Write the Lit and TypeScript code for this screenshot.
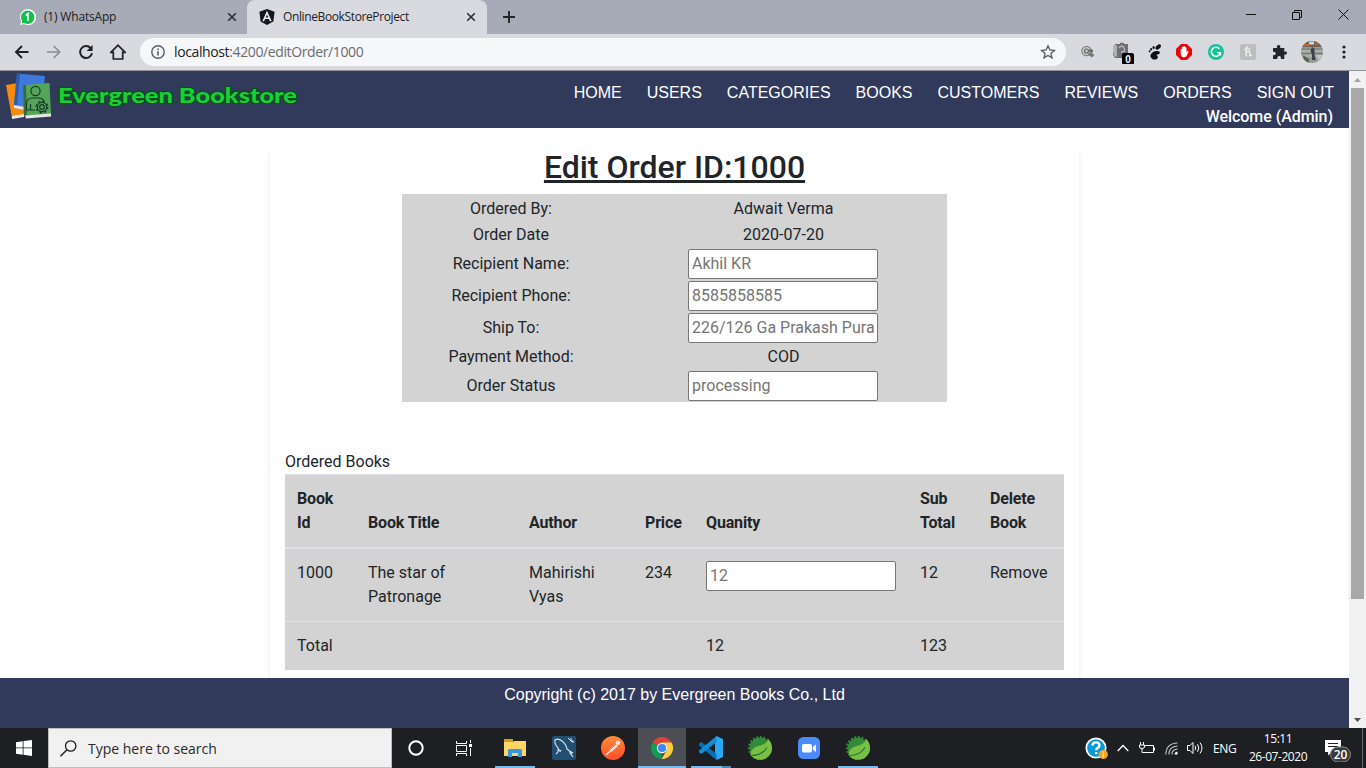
import { LitElement, html, svg, css } from "lit";
import { customElement } from "lit/decorators.js";

const closeX = html`<svg class="tab-close" width="10" height="10" viewBox="0 0 10 10"><path d="M1.2 1.2 8.8 8.8M8.8 1.2 1.2 8.8" stroke="#2b2d31" stroke-width="1.6" fill="none"/></svg>`;

@customElement("browser-chrome")
export class BrowserChrome extends LitElement {
  static styles = css`
    :host { display: block; font-family: "Open Sans", sans-serif; color: #202124; height: 70px; border-bottom: 1px solid #929397; }
    svg { display: block; flex: none; }
    .tabs { height: 34px; background: #a7abb7; display: flex; align-items: flex-start; }
    .tab { display: flex; align-items: center; height: 34px; font-size: 12px; box-sizing: border-box; white-space: nowrap; }
    .tab-one { width: 247px; padding: 0 10px 0 19px; }
    .tab-two { width: 240px; padding: 0 11px 0 12px; background: #d9dadf; border-radius: 8px 8px 0 0; }
    .t1 { margin: 0 0 1px 8px; letter-spacing: -0.18px; flex: 1; }
    .t2 { margin: 0 0 1px 8px; letter-spacing: -0.38px; flex: 1; }
    .plus { margin: 11px 0 0 16px; }
    .controls { display: flex; margin-left: auto; }
    .control { width: 46px; height: 29px; display: flex; align-items: center; justify-content: center; }
    .toolbar { height: 36px; background: #d9dadf; display: flex; align-items: center; }
    .navs { display: flex; width: 140px; box-sizing: border-box; padding-left: 14px; gap: 16px; }
    .omni { width: 926px; height: 28px; border-radius: 14px; background: #f6f7f9; display: flex; align-items: center; box-sizing: border-box; padding: 0 10px 0 11px; font-size: 14px; }
    .url { margin: 0 0 1px 9px; flex: 1; color: #6a6c70; letter-spacing: -0.38px; white-space: nowrap; }
    .host { color: #202124; }
    .exts { display: flex; align-items: center; padding-left: 6px; }
    .ext { width: 32px; display: flex; justify-content: center; }
    .ext.badge { width: 37px; }
    .ext.foot { width: 27px; }
  `;
  render() {
    return html`
      <div class="tabs">
        <div class="tab tab-one">
          <svg width="17" height="17" viewBox="0 0 17 17"><path d="M1 16 2.2 12.2A8 8 0 1 1 5 15Z" fill="#fff"/><circle cx="8.7" cy="8.2" r="6.7" fill="#12c04d"/><path d="M2.5 14.5 3.5 11 6 13.7Z" fill="#12c04d"/><path d="M6.8 6.3 8.9 4.6V12" stroke="#fff" stroke-width="1.7" fill="none"/></svg>
          <span class="t1">(1) WhatsApp</span>${closeX}
        </div>
        <div class="tab tab-two">
          <svg width="16" height="16" viewBox="0 0 16 16"><path d="M8 0 15.6 2.7 14.4 12.4 8 16 1.6 12.4.4 2.7Z" fill="#14171c"/><path d="M8 1.8 12.7 12.3H10.9L9.9 10H6.1L5.1 12.3H3.3Z" fill="#eceef2"/><path d="M8 5.4 9.3 8.5H6.7Z" fill="#14171c"/></svg>
          <span class="t2">OnlineBookStoreProject</span>${closeX}
        </div>
        <svg class="plus" width="12" height="12" viewBox="0 0 12 12"><path d="M6 0V12M0 6H12" stroke="#222428" stroke-width="1.9"/></svg>
        <div class="controls">
          <div class="control"><svg width="10" height="10" viewBox="0 0 10 10"><path d="M0 4.5H10" stroke="#111"/></svg></div>
          <div class="control"><svg width="10" height="10" viewBox="0 0 10 10"><path d="M.5 2.5H7.5V9.5H.5ZM2.5 2V.5H9.5V7.5H8" stroke="#111" fill="none"/></svg></div>
          <div class="control"><svg width="11" height="11" viewBox="0 0 11 11"><path d="M.5.5 10.5 10.5M10.5.5.5 10.5" stroke="#111" fill="none"/></svg></div>
        </div>
      </div>
      <div class="toolbar">
        <div class="navs">
          <svg width="16" height="16" viewBox="0 0 16 16"><path d="M14.5 8H2.2M8 2 2 8l6 6" stroke="#202124" stroke-width="1.9" fill="none"/></svg>
          <svg width="16" height="16" viewBox="0 0 16 16"><path d="M1 8H13.5M7.7 2 13.7 8l-6 6" stroke="#8b8d92" stroke-width="1.7" fill="none"/></svg>
          <svg width="16" height="16" viewBox="0 0 16 16"><path d="M12.6 4A6 6 0 1 0 14 9.3" stroke="#202124" stroke-width="2" fill="none"/><path d="M14.6 1V7H8.6Z" fill="#202124"/></svg>
          <svg width="16" height="16" viewBox="0 0 16 16"><path d="M.9 8.3H3.3V15H12.7V8.3H15.1L8 1.2Z" stroke="#202124" stroke-width="1.7" fill="none"/></svg>
        </div>
        <div class="omni">
          <svg width="14" height="14" viewBox="0 0 14 14"><circle cx="7" cy="7" r="6.2" stroke="#5b5e63" stroke-width="1.4" fill="none"/><path d="M7 6.2V10.5M7 3.4V4.9" stroke="#5b5e63" stroke-width="1.6"/></svg>
          <span class="url"><span class="host">localhost</span>:4200/editOrder/1000</span>
          <svg width="16" height="16" viewBox="0 0 16 16"><path d="M8 1.8 9.8 6 14.4 6.4 10.9 9.4 12 13.9 8 11.5 4 13.9 5.1 9.4 1.6 6.4 6.2 6Z" stroke="#55585d" stroke-width="1.3" fill="none"/></svg>
        </div>
        <div class="exts">
          <div class="ext"><svg width="14" height="14" viewBox="0 0 14 14"><circle cx="5.5" cy="6" r="4.7" stroke="#858585" stroke-width="1.2" fill="#c8c8ca"/><circle cx="5.5" cy="6" r="2" stroke="#666" stroke-width="1.1" fill="none"/><path d="M8 4.5H11.5Q12.5 5.5 11.5 7.5H8.5Z" fill="#666"/><path d="M6.5 9Q11 6.5 13.3 10.2L10.8 12.5Z" fill="#777"/></svg></div>
          <div class="ext badge"><svg width="24" height="24" viewBox="0 0 24 24"><path d="M4 4H9V2.8H13V4H17V15L14 18H4L2 15Z" fill="#6f6f71"/><path d="M2 6 6 5V17L3 16Z" fill="#b1b1b3"/><path d="M8 8Q11 4 13 8T10 12" stroke="#b5b5b5" stroke-width="1.5" fill="none"/><rect x="11" y="13" width="12" height="12" rx="2" fill="#000"/><text x="17" y="22.5" text-anchor="middle" font-family="Liberation Sans" font-weight="700" font-size="10" fill="#fff">0</text></svg></div>
          <div class="ext foot"><svg width="14" height="16" viewBox="0 0 14 16"><ellipse cx="10.2" cy="3" rx="1.9" ry="3.2" fill="#111" transform="rotate(50 10.2 3)"/><ellipse cx="5.6" cy="3.6" rx="1.1" ry="1.5" fill="#111"/><ellipse cx="3.1" cy="5.2" rx="1" ry="1.3" fill="#111"/><ellipse cx="1.6" cy="7.3" rx=".9" ry="1.1" fill="#111"/><path d="M2.5 11Q4.5 6.9 9 7 13 7.2 11.5 9.5C10.5 11 8.5 10 8.8 11.4 11 12.8 9.5 15.7 6.5 15.6 4 15.5 2 13.3 2.5 11Z" fill="#111"/></svg></div>
          <div class="ext"><svg width="16" height="16" viewBox="0 0 16 16"><path d="M5 0H11L16 5V11L11 16H5L0 11V5Z" fill="#e8060c"/><path d="M4.7 9V5.2Q5.5 4.4 6.1 5.2V3Q6.9 2.1 7.6 3V2.5Q8.4 1.8 9.1 2.6V3.5Q10 2.8 10.5 3.7V8.3L11.4 7Q12.5 6.5 12.5 7.6L10.7 11.8Q9.6 13.6 7.5 13.3 5 13 4.7 9Z" fill="#fff"/></svg></div>
          <div class="ext"><svg width="16" height="16" viewBox="0 0 16 16"><circle cx="8" cy="8" r="8" fill="#15c39a"/><path d="M11.4 4.9A4.5 4.5 0 1 0 12.3 8.8H9.2M12.3 8.2V11.4" stroke="#fff" stroke-width="1.5" fill="none"/></svg></div>
          <div class="ext"><svg width="16" height="16" viewBox="0 0 16 16"><rect width="16" height="16" rx="2" fill="#bdbdbd"/><path d="M4.3 5.5Q7 5.5 7.2 3 6.3 2.5 6.2 4.5V12.5M6.2 9Q8.2 6.5 9.7 8V11.5Q10.3 12.5 11.8 10.8M7.2 5.2H10.5" stroke="#f7f7f7" stroke-width="1.2" fill="none"/></svg></div>
          <div class="ext"><svg width="16" height="16" viewBox="0 0 16 16"><path d="M1 4H5Q4.4 1 6.6 1T8.2 4H12.3V7.7Q15 7 15 9T12.3 10.6V15H8.8Q9.3 12 7.2 12T5.3 15H1V11.2Q3.8 11.5 3.8 9.5T1 7.7Z" fill="#242528"/></svg></div>
          <div class="ext"><svg width="22" height="22" viewBox="0 0 22 22"><defs><clipPath id="c"><circle cx="11" cy="11" r="11"/></clipPath></defs><g clip-path="url(#c)"><rect width="22" height="22" fill="#999b98"/><rect width="22" height="6" fill="#6b6253"/><path d="M3 4H8M14 3H17" stroke="#c9632b" stroke-width="2"/><path d="M8 2H13" stroke="#dad5c5" stroke-width="3"/><path d="M0 8H22M0 12.5H22" stroke="#777975" stroke-width="1"/><path d="M0 10H22M0 15H22" stroke="#bfc3c2"/><path d="M11 6 13.5 8V13L14.5 19H11L11 13 9.5 10Z" fill="#36414a"/><path d="M2 14 8 18V22H3Z" fill="#4b6758"/><path d="M16 14H22L17 20Z" fill="#c8c4bd"/></g></svg></div>
          <div class="ext"><svg width="4" height="16" viewBox="0 0 4 16"><g fill="#202124"><circle cx="2" cy="3" r="1.6"/><circle cx="2" cy="8" r="1.6"/><circle cx="2" cy="13" r="1.6"/></g></svg></div>
        </div>
      </div>`;
  }
}

@customElement("store-header")
export class StoreHeader extends LitElement {
  static styles = css`
    :host { display: flex; justify-content: space-between; height: 57px; background: #323a5b; color: #fff; }
    svg { display: block; }
    .menu { display: flex; gap: 25px; font: 16px/24px "Liberation Sans", sans-serif; padding: 10px 15px 0 0; justify-content: flex-end; white-space: nowrap; }
    .welcome { font: 500 16px/24px Roboto, sans-serif; text-align: right; padding-right: 16px; letter-spacing: -0.05px; }
  `;
  render() {
    const items = ["HOME", "USERS", "CATEGORIES", "BOOKS", "CUSTOMERS", "REVIEWS", "ORDERS", "SIGN OUT"];
    return html`
      <svg width="310" height="57" viewBox="0 0 310 57">
        <path d="M6 14 18 12 25 45 12 47Z" fill="#f58a0b"/><path d="M12 45 24 43V46L12 48Z" fill="#eee"/>
        <path d="M17 2.5 45 5 41 39 14 34Z" fill="#3f79dd"/><path d="M17 2.5 14 34 17 35 20 3Z" fill="#2b5cae"/><path d="M14 34 25 36V39L14 37Z" fill="#dfe5ee"/>
        <path d="M23 14 49.5 12 51 43 24 45Z" fill="#54a559"/><path d="M23 14 26 13.8 27 44.7 24 45Z" fill="#2f713a"/><path d="M25 44.5 51 42.5V45.5L26 47.5Z" fill="#e6e8e6"/>
        <g fill="none" stroke="#183b27" stroke-width="1.2"><circle cx="35.5" cy="20" r="4.6"/><path d="M26.5 39V33Q26.5 27 32.5 27H38.5Q42.5 27 44 30M30.5 39V33M26.5 39H35"/><circle cx="42" cy="36" r="2.3"/><circle cx="42" cy="36" r="4.7"/><circle cx="42" cy="36" r="5.8" stroke-width="1.3" stroke-dasharray="2.2 2.35"/></g>
        <text x="58" y="32" textLength="239" lengthAdjust="spacingAndGlyphs" font-family="Lato" font-weight="900" font-size="20" fill="#19cf35" stroke="#0b4d22" stroke-width="2.6" stroke-linejoin="round" paint-order="stroke">Evergreen Bookstore</text>
      </svg>
      <div>
        <div class="menu">${items.map((i) => html`<span>${i}</span>`)}</div>
        <div class="welcome">Welcome (Admin)</div>
      </div>`;
  }
}

@customElement("order-editor")
export class OrderEditor extends LitElement {
  static styles = css`
    :host { display: block; height: 550px; background: #fff; color: #212529; font: 16px/24px Roboto, sans-serif; overflow: hidden; box-sizing: border-box; padding-top: 16px; }
    .card { width: 809px; height: 600px; margin: 0 auto; box-sizing: border-box; padding: 4px 15px 0; box-shadow: 0 8px 4px rgba(0, 0, 0, .1); }
    .title { margin: 0 0 8px; font-size: 32px; line-height: 38px; font-weight: 500; text-align: center; text-decoration: underline; text-decoration-thickness: 3px; text-underline-offset: 2px; text-decoration-skip-ink: none; }
    .details { width: 545px; height: 208px; margin: 0 auto; background: #d3d3d3; box-sizing: border-box; padding-top: 2px; display: grid; grid-template-columns: 218px 327px; grid-template-rows: 26px 26px 32px 32px 32px 26px 32px; justify-items: center; align-items: center; }
    .field { box-sizing: border-box; display: block; width: 190px; height: 30px; border: 1px solid #767676; border-radius: 2px; padding: 0 3px 1px; margin: 0; font: 16px/24px Roboto, sans-serif; background: #fff; outline: none; }
    .details .field { margin-right: 1px; }
    .field::placeholder { color: #757575; opacity: 1; }
    .caption { margin-top: 48px; height: 24px; }
    .books { width: 779px; background: #d3d3d3; border-collapse: separate; border-spacing: 0; table-layout: fixed; }
    .books th { text-align: left; vertical-align: bottom; padding: 12px; border-top: 1px solid #dee2e6; border-bottom: 2px solid #dee2e6; font-weight: 700; letter-spacing: -0.15px; }
    .books td { vertical-align: top; padding: 12px; }
    .books .sum td { border-top: 1px solid #dee2e6; }
    .w1 { width: 71px; } .w2 { width: 161px; } .w3 { width: 116px; } .w4 { width: 61px; } .w5 { width: 214px; } .w6 { width: 70px; } .w7 { width: 86px; }
  `;
  render() {
    const rows: [string, string, boolean][] = [
      ["Ordered By:", "Adwait Verma", false],
      ["Order Date", "2020-07-20", false],
      ["Recipient Name:", "Akhil KR", true],
      ["Recipient Phone:", "8585858585", true],
      ["Ship To:", "226/126 Ga Prakash Puram", true],
      ["Payment Method:", "COD", false],
      ["Order Status", "processing", true],
    ];
    return html`
      <div class="card">
        <h2 class="title">Edit Order ID:1000</h2>
        <div class="details">
          ${rows.map(([k, v, input]) => html`<span>${k}</span>${input ? html`<input class="field" placeholder=${v}>` : html`<span>${v}</span>`}`)}
        </div>
        <div class="caption">Ordered Books</div>
        <table class="books">
          <colgroup><col class="w1"><col class="w2"><col class="w3"><col class="w4"><col class="w5"><col class="w6"><col class="w7"></colgroup>
          <thead><tr><th>Book Id</th><th>Book Title</th><th>Author</th><th>Price</th><th>Quanity</th><th>Sub Total</th><th>Delete Book</th></tr></thead>
          <tbody>
            <tr><td>1000</td><td>The star of<br>Patronage</td><td>Mahirishi Vyas</td><td>234</td><td><input class="field" placeholder="12"></td><td>12</td><td>Remove</td></tr>
            <tr class="sum"><td>Total</td><td></td><td></td><td></td><td>12</td><td>123</td><td></td></tr>
          </tbody>
        </table>
      </div>`;
  }
}

const leaf = svg`<circle cx="12" cy="12" r="10.8" fill="none" stroke="#348a3b" stroke-width="2.4" stroke-dasharray="2 1.6"/><circle cx="12" cy="12" r="10.4" fill="#348a3b"/><path d="M20.5 3Q25.5 9 23.5 16 19 25.5 9 23.5 2.5 21 2.5 17 4 12 9 10.5 18 9 20.5 3Z" fill="#77c043"/><path d="M3.5 19.5Q14 19.500 19 11.500" stroke="#296f32" stroke-width="1.2" fill="none"/>`;

@customElement("task-bar")
export class TaskBar extends LitElement {
  static styles = css`
    :host { display: flex; height: 40px; background: #1d1f22; color: #fff; font-family: "Open Sans", sans-serif; }
    svg { display: block; flex: none; }
    .start { width: 48px; display: flex; align-items: center; justify-content: center; }
    .search { width: 344px; box-sizing: border-box; background: #f1f1f1; border: 1px solid #bdbdbd; display: flex; align-items: center; padding-left: 11px; font-size: 14px; color: #2b2b2b; }
    .hint { margin-left: 11px; white-space: nowrap; }
    .apps { display: flex; }
    .app { width: 48px; margin-right: 1px; display: flex; align-items: center; justify-content: center; position: relative; box-sizing: border-box; }
    .app.cortana { margin-right: 0; }
    .app.view { margin-right: 3px; }
    .app.active { background: #4b4e54; }
    .app.open::after { content: ""; position: absolute; left: 4px; right: 4px; bottom: 0; height: 2px; background: #76b9ed; }
    .app.active::after { left: 0; right: 0; }
    .app.multi::after { background: linear-gradient(90deg, #76b9ed 31px, #5286ae 31px); }
    .tray { margin-left: auto; display: flex; align-items: center; }
    .lang { font-size: 12px; width: 25px; margin-left: 9px; letter-spacing: -0.3px; }
    .clock { width: 66px; margin: 0 0 1px 7px; font-size: 12px; line-height: 18px; text-align: center; letter-spacing: -0.45px; white-space: nowrap; }
    .note { margin-left: 13px; }
    .edge { width: 4px; height: 40px; border-left: 1px solid #66686b; box-sizing: border-box; margin-left: 10px; }
    .chev { margin-left: 9px; } .batt { margin-left: 10px; } .wifi { margin-left: 10px; } .snd { margin-left: 9px; }
  `;
  render() {
    return html`
      <div class="start"><svg width="16" height="16" viewBox="0 0 16 16"><path d="M0 2.2 6.7 1.2V7.5H0ZM7.5 1.1 16 0V7.5H7.5ZM0 8.3H6.7V14.8L0 13.8ZM7.5 8.3H16V16L7.5 14.8Z" fill="#fff"/></svg></div>
      <div class="search">
        <svg width="17" height="17" viewBox="0 0 17 17"><circle cx="10.7" cy="6" r="5.2" stroke="#1d1d1d" stroke-width="1.3" fill="none"/><path d="M7 9.8.5 16.2" stroke="#1d1d1d" stroke-width="1.4"/></svg>
        <span class="hint">Type here to search</span>
      </div>
      <div class="apps">
        <div class="app cortana"><svg width="16" height="16" viewBox="0 0 16 16"><circle cx="8" cy="8" r="6.7" stroke="#fff" stroke-width="2" fill="none"/></svg></div>
        <div class="app view"><svg width="16" height="16" viewBox="0 0 16 16"><path d="M.5 1V3.5H10.5V1M.5 5.5H10.5V11.5H.5ZM.5 16V13.5H10.5V16M14.5 0V3M14.5 8V16" stroke="#fff" fill="none"/><rect x="13" y="4" width="3" height="3" fill="#fff"/></svg></div>
        <div class="app open"><svg width="22" height="20" viewBox="0 0 22 20"><path d="M0 1H9V4H0Z" fill="#d99a16"/><path d="M0 4H9L10 3H22V18H0Z" fill="#ffd567"/><path d="M4 19V12L5 11H17L18 12V19H14V15H8V19Z" fill="#3a97dc"/></svg></div>
        <div class="app"><svg width="24" height="24" viewBox="0 0 24 24"><rect width="24" height="24" rx="2" fill="#214e71"/><path d="M4 18Q7 16 6 12 2 7 3 4 6 2 10 5 14 8 15 13 17 15 21 17L18 17 21 21M6 12Q8 17 9 14" stroke="#d4e2ec" stroke-width="1.2" fill="none"/><path d="M16 2 20 6 22 6 19 4V2" stroke="#d4e2ec" fill="none"/></svg></div>
        <div class="app"><svg width="24" height="24" viewBox="0 0 24 24"><defs><linearGradient id="p" x2="0" y2="1"><stop stop-color="#ff8b39"/><stop offset="1" stop-color="#ff4f28"/></linearGradient></defs><circle cx="12" cy="12" r="12" fill="url(#p)"/><circle cx="17" cy="6.7" r="2.3" fill="#ffe6dc"/><path d="M15.8 8.8 9.4 14.8" stroke="#ffe6dc" stroke-width="3"/><path d="M10 14.2 5 19" stroke="#ffe6dc" stroke-width="1.2"/><path d="M15 8 8.5 14.2" stroke="#ed6337" stroke-width=".8"/></svg></div>
        <div class="app open active"><svg width="22" height="22" viewBox="0 0 22 22"><path d="M11 11 1.5 5.5A11 11 0 0 1 20.5 5.5Z" fill="#db4437"/><path d="M11 11 10.5 22A11 11 0 0 1 1.5 5.5Z" fill="#0f9d58"/><path d="M20.5 5.5A11 11 0 0 1 10.5 22L16 13 11 5.5Z" fill="#ffcd40"/><circle cx="11" cy="11" r="5.2" fill="#f1f1f1"/><circle cx="11" cy="11" r="4.1" fill="#4285f4"/></svg></div>
        <div class="app open multi"><svg width="24" height="24" viewBox="0 0 24 24"><path d="M17.5 0 24 3V21L17.5 24 16 22V2Z" fill="#2aa8f2"/><path d="M0 7.7 2.4 6 17.5 18V24L0 9.5Z" fill="#0071bd"/><path d="M0 16.3 2.4 18 17.5 6V0L0 14.5Z" fill="#148bd7"/></svg></div>
        <div class="app"><svg width="24" height="24" viewBox="0 0 24 24">${leaf}</svg></div>
        <div class="app"><svg width="22" height="22" viewBox="0 0 22 22"><rect width="22" height="22" rx="5.5" fill="#4a8cfb"/><rect x="4" y="7" width="10" height="8.5" rx="1.8" fill="#fff"/><path d="M14.7 10 18 7.5V15L14.7 12.5Z" fill="#fff"/></svg></div>
        <div class="app open"><svg width="24" height="24" viewBox="0 0 24 24">${leaf}</svg></div>
      </div>
      <div class="tray">
        <svg width="23" height="23" viewBox="0 0 23 23"><circle cx="11" cy="11" r="9.7" fill="#0998d8" stroke="#fff" stroke-width="1.7"/><path d="M7.4 8.6Q7.5 5.3 11 5.3T14.5 8.4Q14.4 10 12.5 11 11.2 11.7 11.2 13.3M11.2 15V17.3" stroke="#fff" stroke-width="2.3" fill="none"/><circle cx="18.3" cy="17.5" r="4.6" fill="#f5a41b"/><path d="M18.3 16.8V20.5M18.3 14.5V15.8" stroke="#fff" stroke-width="1.2"/></svg>
        <svg class="chev" width="12" height="8" viewBox="0 0 12 8"><path d="M.7 7 6 1.5 11.3 7" stroke="#fff" stroke-width="1.3" fill="none"/></svg>
        <svg class="batt" width="16" height="12" viewBox="0 0 16 12"><path d="M5.5 3.5H14.5V10.5H3V7M15.5 5.5V8.5M1.5 0V3M4.5 0V3M.5 3H5.5V5Q5.5 6.5 3 6.5T.5 5Z" stroke="#fff" fill="none"/></svg>
        <svg class="wifi" width="13" height="13" viewBox="0 0 13 13"><path d="M.8 12.5Q1 1.5 12.5 1M3.8 12.5Q4 4.5 12.5 4M6.8 12.5Q7 7.5 12.5 7" stroke="#c5c6c8" stroke-width="1.1" fill="none"/><path d="M9.5 12.5Q9.5 10 12.5 9.5V12.5Z" fill="#fff"/></svg>
        <svg class="snd" width="17" height="14" viewBox="0 0 17 14"><path d="M.5 4.5H3L6 1.5V12.5L3 9.5H.5ZM8 4.8Q9.5 7 8 9.2M10.5 3.2Q13 7 10.5 10.8M13 1.5Q17 7 13 12.5" stroke="#fff" fill="none"/></svg>
        <span class="lang">ENG</span>
        <div class="clock">15:11<br>26-07-2020</div>
        <svg class="note" width="28" height="28" viewBox="0 0 28 28"><path d="M1 6H17V18H8L4 21.5V18H1Z" fill="#fff"/><path d="M4 9.5H14M4 12.5H14" stroke="#1d1f22"/><rect x="6.5" y="13" width="20" height="15" rx="7.5" fill="#38393c" stroke="#8a8b8d"/><text x="16.5" y="25" text-anchor="middle" font-family="Open Sans" font-weight="600" font-size="12" fill="#fff">20</text></svg>
        <div class="edge"></div>
      </div>`;
  }
}

@customElement("app-root")
export class AppRoot extends LitElement {
  static styles = css`
    :host { display: flex; flex-direction: column; width: 1366px; height: 768px; overflow: hidden; background: #fff; }
    .view { display: flex; height: 657px; }
    .page { width: 1349px; }
    .footer { height: 50px; box-sizing: border-box; background: #323a5b; color: #fff; text-align: center; font: 16px/24px "Liberation Sans", sans-serif; padding-top: 5px; }
    .scroll { width: 17px; background: #f1f1f1; display: flex; flex-direction: column; align-items: center; }
    .thumb { width: 13px; height: 511px; background: #a8a8a8; }
    .arrow { height: 17px; display: flex; align-items: center; }
    .down { margin-top: auto; }
  `;
  render() {
    return html`
      <browser-chrome></browser-chrome>
      <div class="view">
        <div class="page">
          <store-header></store-header>
          <order-editor></order-editor>
          <div class="footer">Copyright (c) 2017 by Evergreen Books Co., Ltd</div>
        </div>
        <div class="scroll">
          <div class="arrow"><svg width="7" height="4" viewBox="0 0 7 4"><path d="M0 4 3.5 0 7 4Z" fill="#a3a3a3"/></svg></div>
          <div class="thumb"></div>
          <div class="arrow down"><svg width="7" height="4" viewBox="0 0 7 4"><path d="M0 0H7L3.5 4Z" fill="#505050"/></svg></div>
        </div>
      </div>
      <task-bar></task-bar>`;
  }
}
